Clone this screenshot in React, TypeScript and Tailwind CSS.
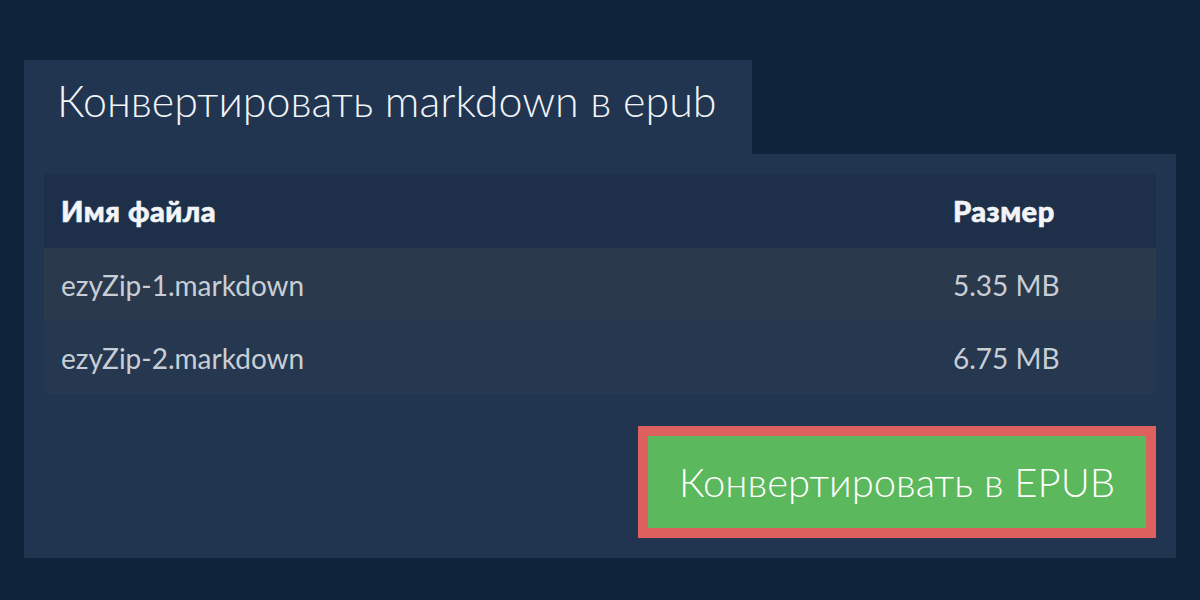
const rows = [
  { name: "ezyZip-1.markdown", size: "5.35 MB" },
  { name: "ezyZip-2.markdown", size: "6.75 MB" },
];

export default function App() {
  return (
    <div
      className="h-[600px] w-full bg-[#0f233a] px-6 pt-[60px]"
      style={{ fontFamily: "Lato, 'Noto Sans', sans-serif" }}
    >
      <div className="flex h-[94px] w-[728px] items-center bg-[#213550] pb-[14px] pl-[33px]">
        <h1 className="text-[43px] font-light leading-none text-[#f2f4f7]">
          Конвертировать markdown в epub
        </h1>
      </div>

      <div className="bg-[#213550] p-5">
        <table className="w-full border-collapse">
          <thead>
            <tr className="h-[74px] bg-[#1e3049] text-left text-[29px] font-black tracking-[0.5px] text-[#f2f4f7] [-webkit-text-stroke:0.6px_#f2f4f7]">
              <th className="pl-[17px] font-black">Имя файла</th>
              <th className="w-[203px] font-black">Размер</th>
            </tr>
          </thead>
          <tbody>
            {rows.map((row, i) => (
              <tr
                key={row.name}
                className={
                  "h-[73px] text-[28px] text-[#c9ced6] " +
                  (i % 2 === 0 ? "bg-[#2a3a4c]" : "bg-[#25384f]")
                }
              >
                <td className="pl-[17px]">{row.name}</td>
                <td>{row.size}</td>
              </tr>
            ))}
          </tbody>
        </table>

        <div className="mt-8 flex justify-end">
          <button className="flex h-[112px] w-[518px] items-center justify-center border-[10px] border-[#dd605e] bg-[#5cb85c] text-[40px] font-light text-white">
            Конвертировать в EPUB
          </button>
        </div>
      </div>
    </div>
  );
}
